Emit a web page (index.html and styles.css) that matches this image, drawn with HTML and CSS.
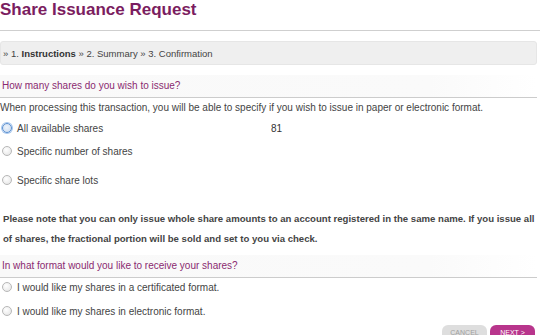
FILE: index.html
```html
<!DOCTYPE html>
<html>
<head>
<meta charset="utf-8">
<link rel="stylesheet" href="styles.css">
</head>
<body>
<div class="page">
  <h1 class="title">Share Issuance Request</h1>
  <div class="crumbs">» 1. <b>Instructions</b> » 2. Summary » 3. Confirmation</div>

  <div class="section-head">How many shares do you wish to issue?</div>
  <p class="intro">When processing this transaction, you will be able to specify if you wish to issue in paper or electronic format.</p>

  <div class="opt opt-first">
    <span class="radio checked"></span>
    <span class="label">All available shares</span>
    <span class="count">81</span>
  </div>
  <div class="opt">
    <span class="radio"></span>
    <span class="label">Specific number of shares</span>
  </div>
  <div class="opt opt-lots">
    <span class="radio"></span>
    <span class="label">Specific share lots</span>
  </div>

  <p class="note">Please note that you can only issue whole share amounts to an account registered in the same name. If you issue all of shares, the fractional portion will be sold and set to you via check.</p>

  <div class="section-head head2">In what format would you like to receive your shares?</div>

  <div class="opt opt-fmt">
    <span class="radio"></span>
    <span class="label">I would like my shares in a certificated format.</span>
  </div>
  <div class="opt opt-fmt2">
    <span class="radio"></span>
    <span class="label">I would like my shares in electronic format.</span>
  </div>

  <div class="actions">
    <span class="btn btn-cancel">CANCEL</span>
    <span class="btn btn-next">NEXT &gt;</span>
  </div>
</div>
</body>
</html>
```
FILE: styles.css
```css
html, body {
  margin: 0;
  padding: 0;
  background: #fff;
}
body {
  font-family: "Liberation Sans", Arial, sans-serif;
  color: #444;
  font-size: 10px;
}
.page {
  width: 540px;
  height: 335px;
  overflow: hidden;
}
.title {
  margin: 0;
  font-size: 17px;
  line-height: 20px;
  color: #7b1d60;
  font-weight: bold;
  border-bottom: 1px solid #cfcfcf;
  height: 31px;
  box-sizing: border-box;
}
.crumbs {
  margin: 10px 3px 0 0;
  height: 24px;
  line-height: 23px;
  padding-left: 2px;
  background: #efefef;
  border: 1px solid #e6e6e6;
  border-radius: 3px;
  color: #444;
  font-size: 9.5px;
  box-sizing: border-box;
}
.crumbs b { color: #333; }
.section-head {
  margin: 10px 3px 0 0;
  height: 22px;
  line-height: 22px;
  padding-left: 2px;
  color: #8a2a70;
  font-size: 10px;
  background: linear-gradient(to right, #f9f9f9, #fafafa 80%, #fff);
  border-bottom: 1px solid #cccccc;
}
.intro {
  margin: 3px 0 0 0;
  line-height: 13px;
  color: #444;
}
.opt {
  display: flex;
  align-items: center;
  height: 14px;
  margin-top: 9px;
}
.opt-first { margin-top: 7px; }
.opt-lots { margin-top: 15px; }
.radio {
  width: 8px;
  height: 8px;
  border-radius: 50%;
  border: 1px solid #b7b7b7;
  background: radial-gradient(circle at 40% 35%, #ffffff, #e2e2e2);
  margin-left: 2px;
  margin-right: 5px;
  flex: none;
}
.radio.checked {
  border: 1px solid #5a8fd0;
  box-shadow: 0 0 0 1px #a9c8ee;
  background: radial-gradient(circle at 45% 40%, #eef4fb, #c7d8ee);
}
.label { width: 254px; }
.count { color: #333; }
.note {
  margin: 22px 0 0 0;
  padding-left: 3px;
  font-weight: bold;
  color: #444;
  line-height: 20px;
  font-size: 9.6px;
}
.head2 { margin-top: 6px; }
.opt-fmt { margin-top: 2px; }
.opt-fmt2 { margin-top: 10px; }
.actions {
  display: flex;
  justify-content: flex-end;
  gap: 3px;
  margin-top: 7px;
  padding-right: 5px;
}
.btn {
  display: inline-block;
  width: 45px;
  height: 20px;
  border-radius: 6px;
  font-size: 7px;
  line-height: 16px;
  text-align: center;
}
.btn-cancel { background: #dedede; color: #a0a0a0; }
.btn-next { background: #b8358c; color: #fff; }
```
